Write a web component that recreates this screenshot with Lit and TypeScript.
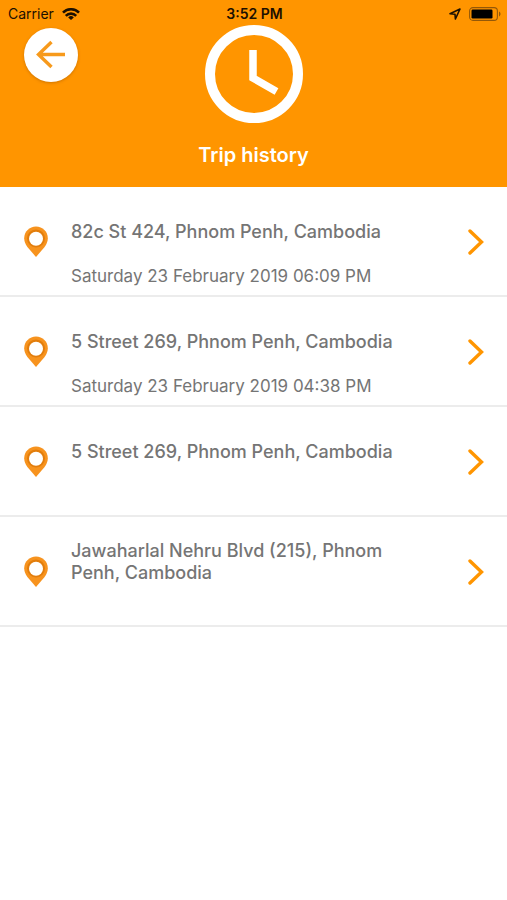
import { LitElement, html, css, nothing } from "lit";
import { customElement, property } from "lit/decorators.js";

interface Trip {
  place: string;
  time?: string;
}

const TRIPS: Trip[] = [
  { place: "82c St 424, Phnom Penh, Cambodia", time: "Saturday 23 February 2019 06:09 PM" },
  { place: "5 Street 269, Phnom Penh, Cambodia", time: "Saturday 23 February 2019 04:38 PM" },
  { place: "5 Street 269, Phnom Penh, Cambodia" },
  { place: "Jawaharlal Nehru Blvd (215), Phnom Penh, Cambodia" },
];

@customElement("status-bar")
export class StatusBar extends LitElement {
  static styles = css`
    :host {
      display: grid;
      grid-template-columns: 1fr auto 1fr;
      align-items: center;
      box-sizing: border-box;
      height: 25px;
      padding: 3px 6px 0 8px;
      color: #1c1000;
      font-size: 14px;
      line-height: 20px;
    }
    .side {
      display: flex;
      align-items: center;
      gap: 8px;
    }
    .end {
      justify-content: flex-end;
    }
    .time {
      font-weight: 600;
    }
    svg {
      display: block;
    }
  `;

  render() {
    return html`
      <span class="side">
        Carrier
        <svg width="18" height="12" viewBox="0 0 18 12" aria-hidden="true">
          <g fill="none" stroke="#1c1000" stroke-width="2.6">
            <path d="M1 4.6a11.3 11.3 0 0 1 16 0" />
            <path d="M3.8 7.8a7.4 7.4 0 0 1 10.4 0" />
          </g>
          <path d="M9 12 6.2 9.4a4 4 0 0 1 5.6 0z" fill="#1c1000" />
        </svg>
      </span>
      <span class="time">3:52 PM</span>
      <span class="side end">
        <svg width="12" height="12" viewBox="0 0 12 12" aria-hidden="true">
          <path d="M1 5.8 11 1 6.4 11 6 6.2z" fill="none" stroke="#1c1000" stroke-width="1.6" stroke-linejoin="round" />
        </svg>
        <svg width="32" height="14" viewBox="0 0 32 14" aria-hidden="true">
          <rect x="0.6" y="0.6" width="27.8" height="12.8" rx="3.4" fill="none" stroke="#945808" stroke-width="1.1" />
          <rect x="2.5" y="2.5" width="21" height="9" rx="1.2" fill="#000" />
          <path d="M30 4.6c2 .8 2 4 0 4.8z" fill="#945808" />
        </svg>
      </span>
    `;
  }
}

@customElement("trip-row")
export class TripRow extends LitElement {
  @property({ attribute: false }) trip!: Trip;

  static styles = css`
    :host {
      display: block;
    }
    .row {
      display: flex;
      align-items: center;
      gap: 23px;
      box-sizing: border-box;
      min-height: 110px;
      padding: 2px 23px 0 24px;
      border-bottom: 2px solid #ececec;
      color: #757575;
      text-decoration: none;
    }
    .text {
      flex: 1;
      align-self: stretch;
      padding: 21px 44px 0 0;
    }
    .place {
      display: flex;
      align-items: center;
      min-height: 44px;
      font-size: 18px;
      font-weight: 500;
      line-height: 22px;
    }
    .when {
      display: block;
      padding-top: 11px;
      font-size: 17px;
      line-height: 22px;
    }
    svg {
      display: block;
      flex: none;
    }
  `;

  render() {
    const { place, time } = this.trip;
    return html`
      <a class="row" href="#trip">
        <svg width="24" height="32" viewBox="0 0 24 32" aria-hidden="true">
          <path d="M12 .6C5.4 .6 .2 5.8 .2 12.2c0 3.4 1.3 6 3.2 8.8L12 31l8.6-10c1.900-2.800 3.200-5.400 3.200-8.800C23.800 5.800 18.600 .6 12 .6z" fill="#f7931e" />
          <circle cx="12" cy="12.400" r="9" fill="#e27d0c" />
          <circle cx="12" cy="12.800" r="7" fill="#fff" />
        </svg>
        <span class="text">
          <span class="place">${place}</span>
          ${time ? html`<time class="when">${time}</time>` : nothing}
        </span>
        <svg width="16" height="26" viewBox="0 0 16 26" aria-hidden="true">
          <path d="M2 2l11.500 11L2 24" fill="none" stroke="#ff9500" stroke-width="3.400" stroke-linecap="round" />
        </svg>
      </a>
    `;
  }
}

@customElement("app-root")
export class AppRoot extends LitElement {
  static styles = css`
    :host {
      display: block;
      min-height: 100vh;
      background: #fff;
      font-family: Inter, "Liberation Sans", sans-serif;
    }
    .header {
      padding-bottom: 20px;
      background: #ff9500;
      color: #fff;
    }
    .bar {
      display: grid;
      grid-template-columns: 1fr auto 1fr;
      padding: 0 24px;
    }
    .back {
      display: grid;
      place-items: center;
      width: 54px;
      height: 54px;
      margin: 3px 0 0;
      padding: 0;
      border: 0;
      border-radius: 50%;
      background: #fff;
      box-shadow: 0 1px 3px rgba(120, 60, 0, 0.35);
      cursor: pointer;
    }
    .title {
      margin: 20px 0 0;
      font-size: 20px;
      font-weight: 600;
      line-height: 24px;
      text-align: center;
    }
    .trips {
      margin: 0;
      padding: 0;
      list-style: none;
    }
    svg {
      display: block;
    }
  `;

  render() {
    return html`
      <header class="header">
        <status-bar></status-bar>
        <div class="bar">
          <button class="back" type="button" aria-label="Back">
            <svg width="30" height="30" viewBox="0 0 30 30" aria-hidden="true">
              <path d="M15.500 2 2.500 14.500l13 12.500M2.500 14.500H29" fill="none" stroke="#f79a1c" stroke-width="3.400" />
            </svg>
          </button>
          <svg width="98" height="98" viewBox="0 0 98 98" aria-hidden="true">
            <circle cx="49" cy="49" r="44" fill="none" stroke="#fff" stroke-width="10" />
            <path d="M48 25v28l23.500 13.500" fill="none" stroke="#fff" stroke-width="7.500" />
          </svg>
        </div>
        <h1 class="title">Trip history</h1>
      </header>
      <main>
        <ul class="trips">
          ${TRIPS.map((trip) => html`<li><trip-row .trip=${trip}></trip-row></li>`)}
        </ul>
      </main>
    `;
  }
}
